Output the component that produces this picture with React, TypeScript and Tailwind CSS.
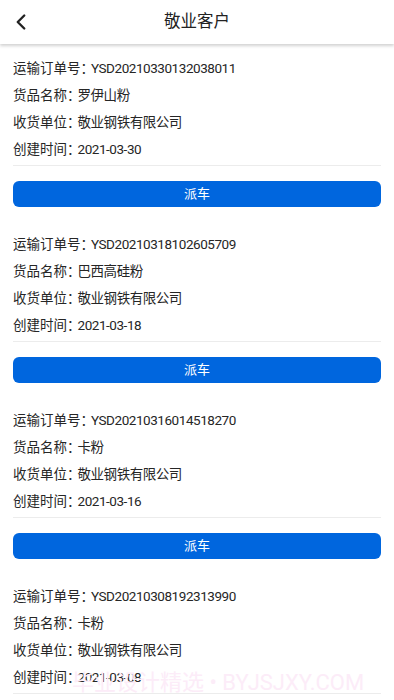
import { ChevronLeft } from "lucide-react";

const ORDERS = [
  { no: "YSD20210330132038011", goods: "罗伊山粉", unit: "敬业钢铁有限公司", date: "2021-03-30" },
  { no: "YSD20210318102605709", goods: "巴西高硅粉", unit: "敬业钢铁有限公司", date: "2021-03-18" },
  { no: "YSD20210316014518270", goods: "卡粉", unit: "敬业钢铁有限公司", date: "2021-03-16" },
  { no: "YSD20210308192313990", goods: "卡粉", unit: "敬业钢铁有限公司", date: "2021-03-08" },
];

function OrderCard({ order }: { order: (typeof ORDERS)[number] }) {
  const rows = [
    ["运输订单号", order.no],
    ["货品名称", order.goods],
    ["收货单位", order.unit],
    ["创建时间", order.date],
  ];
  return (
    <div className="px-[13px] pt-[11px] pb-[13px]">
      {rows.map(([k, v]) => (
        <div key={k} className="h-[27px] flex items-center text-[13.5px] text-[#262626] whitespace-nowrap">
          <span>
            {k}
            <span className="tracking-[-3px]">：</span>
          </span>
          <span className="tracking-[-0.45px]">{v}</span>
        </div>
      ))}
      <div className="mt-[2px] h-px bg-[#ececec]" />
      <button className="mt-[15px] w-full h-[26px] rounded-[6px] bg-[#0066de] text-white text-[13px] flex items-center justify-center">
        派车
      </button>
    </div>
  );
}

export default function App() {
  return (
    <div
      className="relative w-[394px] h-[700px] overflow-hidden bg-white"
      style={{ fontFamily: '"Roboto", "Noto Sans CJK SC", sans-serif' }}
    >
      <header className="relative z-10 h-[44px] flex items-center justify-center bg-white shadow-[0_2px_3px_rgba(0,0,0,0.18)]">
        <ChevronLeft className="absolute left-[8px] top-[9px] w-[26px] h-[26px] text-[#222]" strokeWidth={2.2} />
        <h1 className="text-[16.5px] text-[#222]">敬业客户</h1>
      </header>
      <main>
        {ORDERS.map((o) => (
          <OrderCard key={o.no} order={o} />
        ))}
      </main>
      <div className="absolute left-[72px] top-[666px] text-[22px] text-[#fcecf8] pointer-events-none">
        毕业设计精选 • BYJSJXY.COM
      </div>
    </div>
  );
}
